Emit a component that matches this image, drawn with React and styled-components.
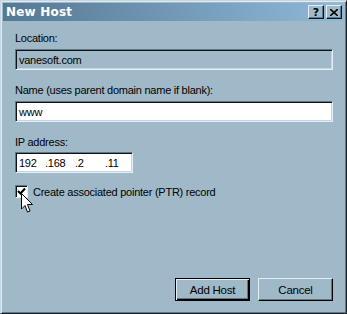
import React from 'react'
import styled, { createGlobalStyle } from 'styled-components'

const Global = createGlobalStyle`
  html, body {
    margin: 0;
    padding: 0;
    background: #a0b9c8;
  }
  * { box-sizing: border-box; }
`

const Window = styled.div`
  position: relative;
  width: 347px;
  height: 314px;
  background: #a0b9c8;
  border-top: 1px solid #c4d6e2;
  border-left: 1px solid #c4d6e2;
  border-right: 1px solid #1c242a;
  border-bottom: 1px solid #1c242a;
  box-shadow: inset 1px 1px 0 #dfeaf1, inset -1px -1px 0 #5f7686;
  padding: 2px;
  display: flex;
  flex-direction: column;
  font-family: 'Liberation Sans', Arial, sans-serif;
  font-size: 11px;
  letter-spacing: -0.25px;
  color: #000;
`

const TitleBar = styled.div`
  height: 18px;
  background: linear-gradient(to right, #557893, #8fb9d9);
  display: flex;
  align-items: center;
  justify-content: space-between;
  padding: 0 2px 0 3px;
`

const Title = styled.span`
  color: #fff;
  font-weight: bold;
  font-size: 12px;
  font-family: 'DejaVu Sans', 'Liberation Sans', sans-serif;
  letter-spacing: 0.2px;
`

const Controls = styled.div`
  display: flex;
  gap: 2px;
`

const CtlButton = styled.div`
  width: 16px;
  height: 14px;
  background: #a0b9c8;
  border-top: 1px solid #e4eef4;
  border-left: 1px solid #e4eef4;
  border-right: 1px solid #101418;
  border-bottom: 1px solid #101418;
  box-shadow: inset -1px -1px 0 #5f7686;
  display: flex;
  align-items: center;
  justify-content: center;
  font-weight: bold;
  font-size: 11px;
  letter-spacing: 0;
  line-height: 1;
  font-family: 'DejaVu Sans', sans-serif;
`

const Body = styled.div`
  flex: 1;
  padding: 10px 11px 10px 12px;
  display: flex;
  flex-direction: column;
`

const Label = styled.div`
  height: 14px;
  line-height: 14px;
  margin-top: ${p => p.$top || 0}px;
`

const Field = styled.div`
  margin-top: ${p => p.$top || 4}px;
  width: ${p => p.$width || '318px'};
  height: 21px;
  background: ${p => (p.$disabled ? '#a0b9c8' : '#fff')};
  border-top: 1px solid #5f7686;
  border-left: 1px solid #5f7686;
  border-right: 1px solid #e4eef4;
  border-bottom: 1px solid #e4eef4;
  box-shadow: inset 1px 1px 0 #0e1216, inset -1px -1px 0 #c4d6e2;
  padding: 0 3px;
  display: flex;
  align-items: center;
  white-space: pre;
`

const Octet = styled.span`
  width: ${p => p.$w}px;
  flex: none;
`

const CheckRow = styled.div`
  margin-top: 12px;
  display: flex;
  align-items: center;
  gap: 5px;
`

const Box = styled.div`
  width: 13px;
  height: 13px;
  background: #fff;
  border-top: 1px solid #5f7686;
  border-left: 1px solid #5f7686;
  border-right: 1px solid #e4eef4;
  border-bottom: 1px solid #e4eef4;
  box-shadow: inset 1px 1px 0 #0e1216;
  display: flex;
  align-items: center;
  justify-content: center;
`

const Footer = styled.div`
  margin-top: auto;
  display: flex;
  justify-content: flex-end;
  gap: 8px;
`

const Button = styled.div`
  width: 75px;
  height: 23px;
  background: #a0b9c8;
  display: flex;
  align-items: center;
  justify-content: center;
  font-size: 11.5px;
  border-top: 1px solid ${p => (p.$default ? '#000' : '#e4eef4')};
  border-left: 1px solid ${p => (p.$default ? '#000' : '#e4eef4')};
  border-right: 1px solid #000;
  border-bottom: 1px solid #000;
  box-shadow: ${p =>
    p.$default
      ? 'inset 1px 1px 0 #e4eef4, inset -1px -1px 0 #000, inset -2px -2px 0 #5f7686'
      : 'inset -1px -1px 0 #5f7686'};
`

const Cursor = styled.svg`
  position: absolute;
  left: 20px;
  top: 192px;
`

export default function App() {
  return (
    <>
      <Global />
      <Window>
        <TitleBar>
          <Title>New Host</Title>
          <Controls>
            <CtlButton>?</CtlButton>
            <CtlButton>
              <svg width="8" height="7" viewBox="0 0 8 7">
                <path d="M0 0 L8 7 M8 0 L0 7" stroke="#000" strokeWidth="1.6" />
              </svg>
            </CtlButton>
          </Controls>
        </TitleBar>
        <Body>
          <Label>Location:</Label>
          <Field $disabled>vanesoft.com</Field>
          <Label $top={13}>Name (uses parent domain name if blank):</Label>
          <Field>www</Field>
          <Label $top={13}>IP address:</Label>
          <Field $width="118px" $top={3}>
            <Octet $w={26}>192</Octet>
            <Octet $w={30}>.168</Octet>
            <Octet $w={30}>.2</Octet>
            <Octet $w={20}>.11</Octet>
          </Field>
          <CheckRow>
            <Box>
              <svg width="9" height="9" viewBox="0 0 9 9">
                <path d="M1 4 L3.5 6.5 L8 1.5" stroke="#000" strokeWidth="2" fill="none" />
              </svg>
            </Box>
            <span>Create associated pointer (PTR) record</span>
          </CheckRow>
          <Footer>
            <Button $default>Add Host</Button>
            <Button>Cancel</Button>
          </Footer>
        </Body>
        <Cursor width="13" height="22" viewBox="0 0 13 22">
          <path d="M0.5 0.5 L0.5 16 L4 12.5 L6.5 19 L9 18 L6.5 11.5 L11.5 11.5 Z" fill="#fff" stroke="#000" strokeWidth="1" />
        </Cursor>
      </Window>
    </>
  )
}
